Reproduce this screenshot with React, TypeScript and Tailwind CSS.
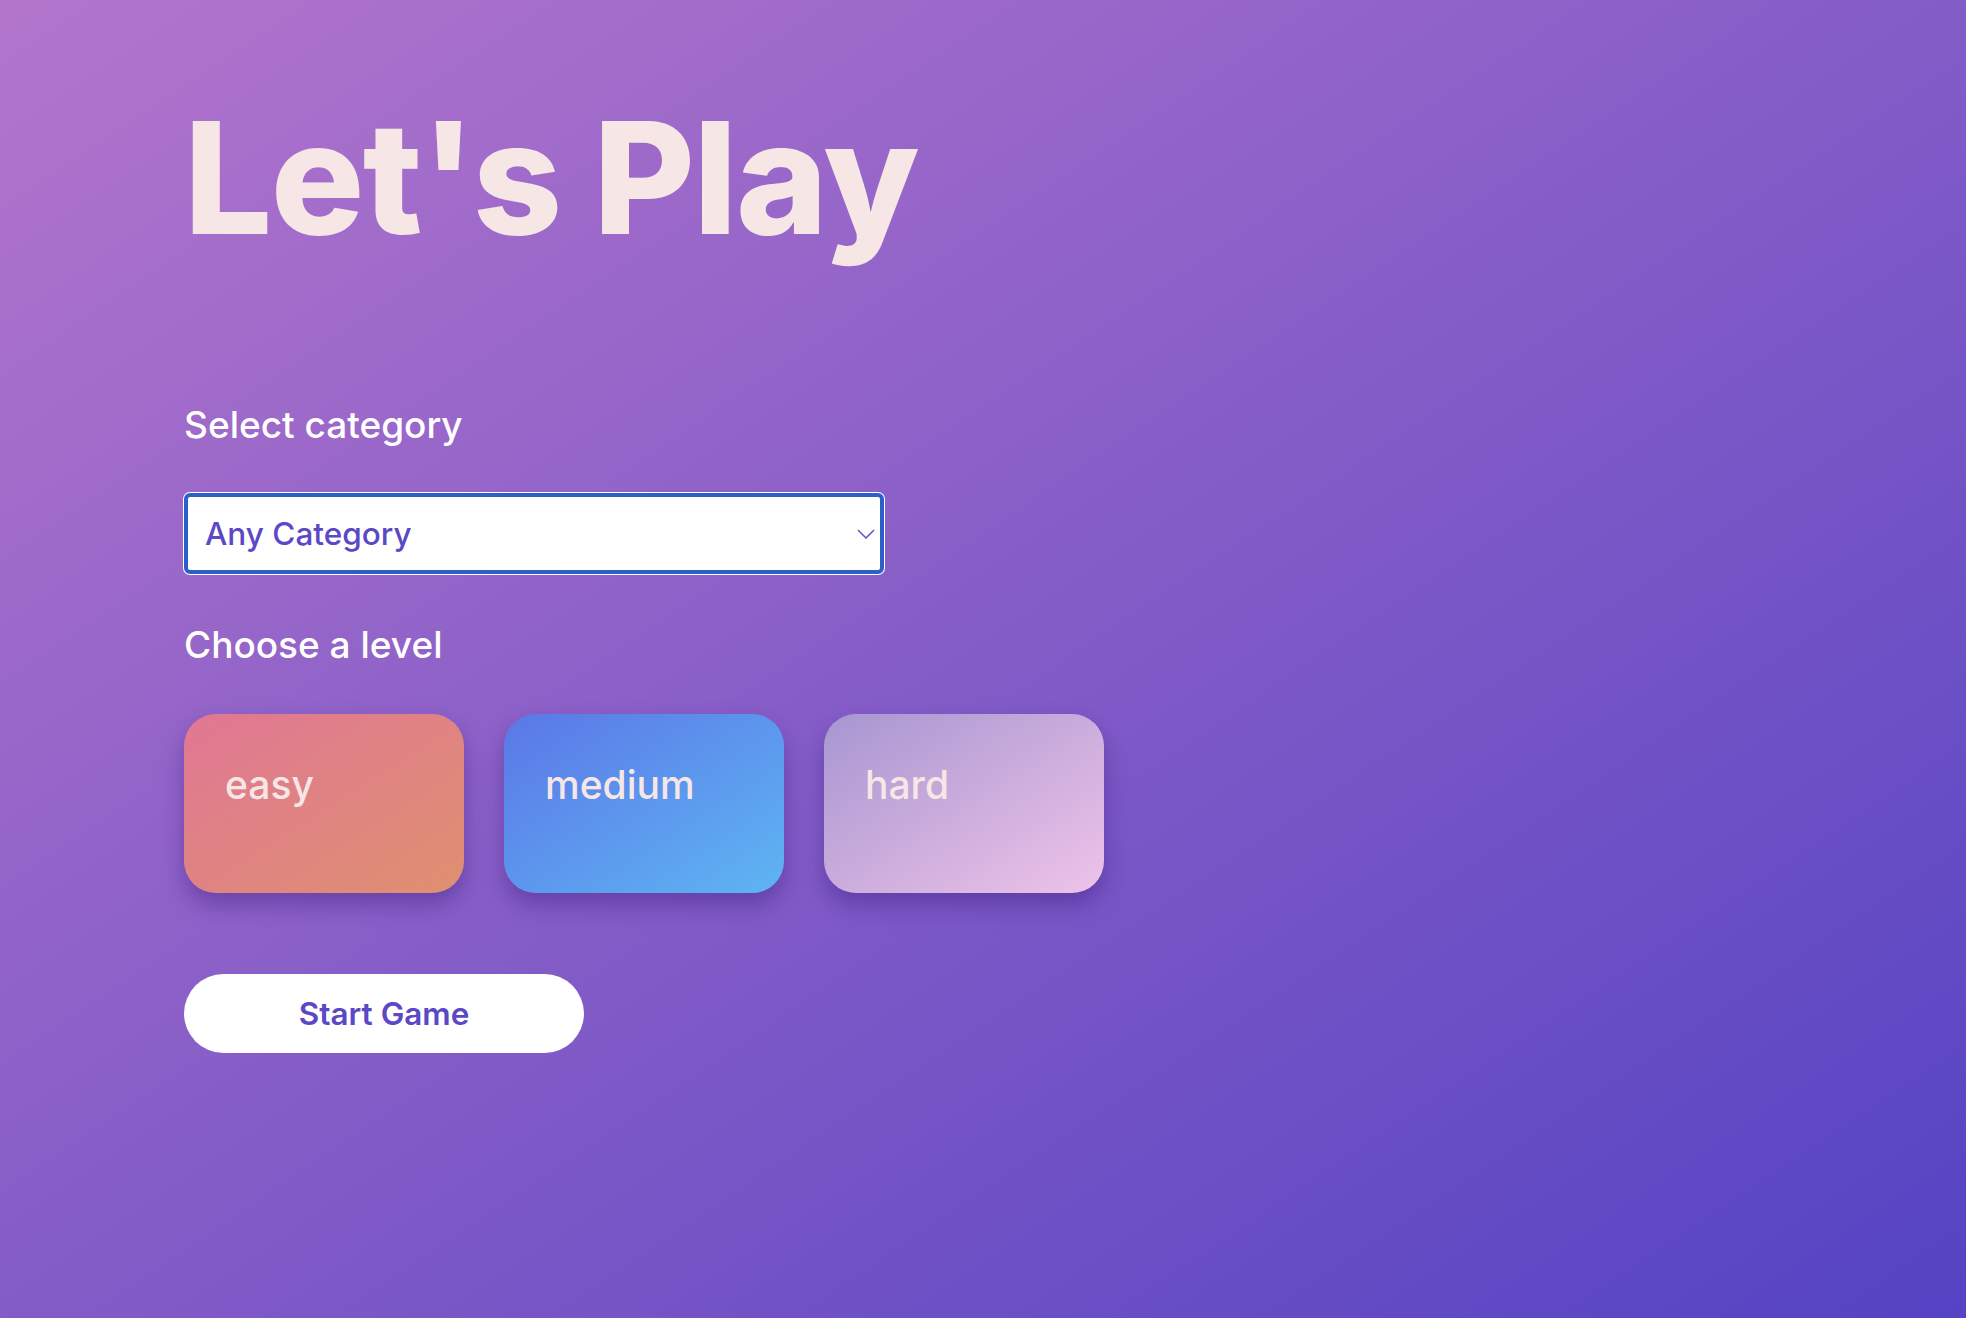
import React, { useState } from "react";

const levels = [
  { name: "easy", bg: "bg-[linear-gradient(to_bottom_right,#e07794,#df9070)]" },
  { name: "medium", bg: "bg-[linear-gradient(to_bottom_right,#5b77e7,#5eb5f3)]" },
  { name: "hard", bg: "bg-[linear-gradient(to_bottom_right,#a796d1,#eec3e8)]" },
];

export default function App() {
  const [level, setLevel] = useState("");

  return (
    <div className="min-h-screen w-full bg-[linear-gradient(to_bottom_right,#b375cc,#5443c3)] pl-[184px] font-['Inter',sans-serif]">
      <h1 className="pt-[100px] text-[156px] leading-none font-extrabold tracking-[-0.01em] text-[#f7e6e6]">
        Let's Play
      </h1>

      <p className="mt-[149px] text-[37px] leading-[40px] font-medium text-white">Select category</p>

      <div className="mt-[48px] flex h-[81px] w-[700px] items-center justify-between rounded-[6px] border-4 border-[#2b5fca] bg-white pl-[17px] pr-[5px] ring-1 ring-white">
        <span className="text-[31.5px] font-medium text-[#5b48c6]">Any Category</span>
        <svg width="18" height="10" viewBox="0 0 18 10" fill="none">
          <path d="M1 1l8 8 8-8" stroke="#6a52d0" strokeWidth="1.6" />
        </svg>
      </div>

      <p className="mt-[51px] text-[37px] leading-[40px] font-medium text-white">Choose a level</p>

      <div className="mt-[49px] flex gap-[40px]">
        {levels.map((l) => (
          <div
            key={l.name}
            onClick={() => setLevel(l.name)}
            className={`flex h-[179px] w-[280px] cursor-pointer flex-col items-start rounded-[32px] pl-[41px] pt-[48px] text-[39px] leading-[46px] font-medium text-[#f7e6e6] shadow-[0_12px_22px_rgba(55,25,120,0.4)] ${l.bg} ${level === l.name ? "outline-2 outline-white" : ""}`}
          >
            {l.name}
          </div>
        ))}
      </div>

      <button className="mt-[81px] h-[79px] w-[400px] rounded-full bg-white text-[31.5px] font-semibold text-[#5b48c6]">
        Start Game
      </button>
    </div>
  );
}
